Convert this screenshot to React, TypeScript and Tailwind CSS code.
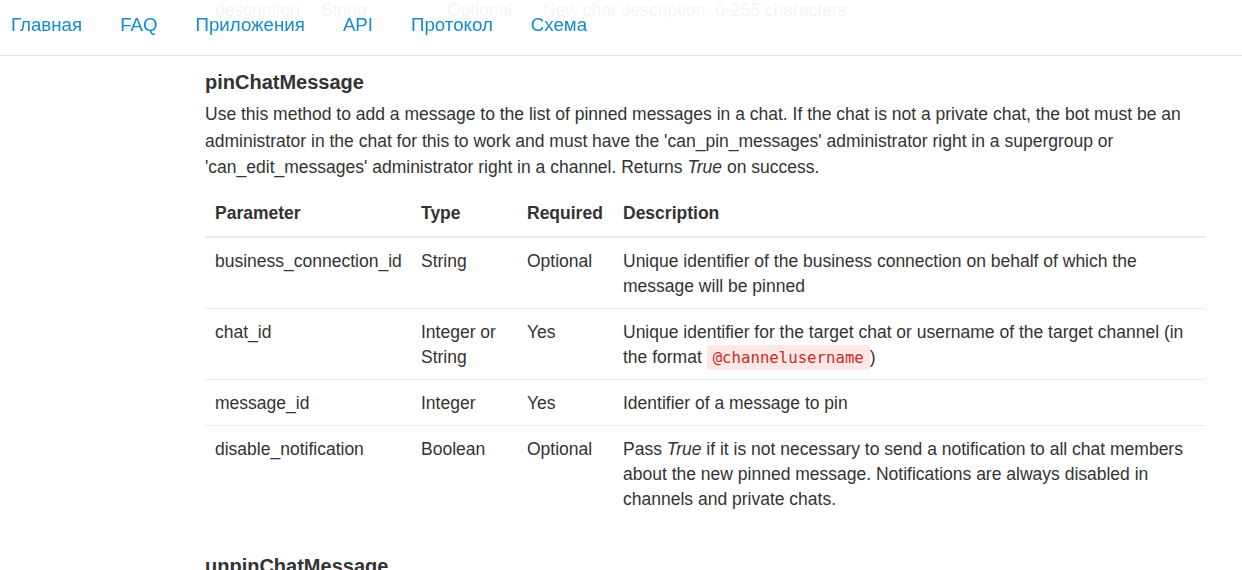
const NAV_LINKS = ['Главная', 'FAQ', 'Приложения', 'API', 'Протокол', 'Схема'];

const PARAMS = [
  {
    name: 'business_connection_id',
    type: 'String',
    required: 'Optional',
    description: <>Unique identifier of the business connection on behalf of which the message will be pinned</>,
  },
  {
    name: 'chat_id',
    type: 'Integer or String',
    required: 'Yes',
    description: (
      <>
        Unique identifier for the target chat or username of the target channel (in the format{' '}
        <code className="rounded-[2px] bg-[#fde8e5] px-[6px] py-[3px] font-['DejaVu_Sans_Mono',monospace] text-[15.7px] text-[#cf2a2a]">
          @channelusername
        </code>
        )
      </>
    ),
  },
  {
    name: 'message_id',
    type: 'Integer',
    required: 'Yes',
    description: <>Identifier of a message to pin</>,
  },
  {
    name: 'disable_notification',
    type: 'Boolean',
    required: 'Optional',
    description: (
      <>
        Pass <em>True</em> if it is not necessary to send a notification to all chat members about the new pinned
        message. Notifications are always disabled in channels and private chats.
      </>
    ),
  },
];

export default function App() {
  return (
    <div className="min-h-[570px] overflow-hidden bg-white font-['Liberation_Sans',Arial,sans-serif] text-[17.5px] text-[#333]">
      {/* sticky header over the scrolled page */}
      <nav className="fixed inset-x-0 top-0 z-10 flex h-[56px] items-center gap-[38px] border-b border-[#e5e5e5] bg-white/[0.95] pl-[11px] text-[18.7px] text-[#168acd]">
        {NAV_LINKS.map((link) => (
          <a key={link} href="#" className="pb-[5px] hover:underline">
            {link}
          </a>
        ))}
      </nav>

      <div className="ml-[205px] mt-[-12px] w-[1000px]">
        {/* tail of the previous method's table, scrolled under the header */}
        <table className="w-full table-fixed border-collapse leading-[25px]">
          <colgroup>
            <col className="w-[106px]" />
            <col className="w-[126px]" />
            <col className="w-[96px]" />
            <col />
          </colgroup>
          <tbody>
            <tr>
              <td className="p-[10px] align-top">description</td>
              <td className="p-[10px] align-top">String</td>
              <td className="p-[10px] align-top">Optional</td>
              <td className="p-[10px] align-top">New chat description, 0-255 characters</td>
            </tr>
          </tbody>
        </table>

        <h4 className="mt-[34px] text-[20px] font-bold leading-[30px]">pinChatMessage</h4>
        <p className="mt-[4px] leading-[26.5px]">
          Use this method to add a message to the list of pinned messages in a chat. If the chat is not a private chat,
          the bot must be an administrator in the chat for this to work and must have the 'can_pin_messages'
          administrator right in a supergroup or 'can_edit_messages' administrator right in a channel. Returns{' '}
          <em>True</em> on success.
        </p>

        <table className="mt-[10px] w-full table-fixed border-collapse leading-[25px]">
          <colgroup>
            <col className="w-[206px]" />
            <col className="w-[106px]" />
            <col className="w-[96px]" />
            <col />
          </colgroup>
          <thead>
            <tr className="border-b-2 border-[#ececec] text-left">
              <th className="p-[10px] font-bold">Parameter</th>
              <th className="p-[10px] font-bold">Type</th>
              <th className="p-[10px] font-bold">Required</th>
              <th className="p-[10px] font-bold">Description</th>
            </tr>
          </thead>
          <tbody>
            {PARAMS.map((param, i) => (
              <tr key={param.name} className={i > 0 ? 'border-t border-[#ececec]' : ''}>
                <td className="px-[10px] pb-[9px] pt-[11px] align-top">{param.name}</td>
                <td className="px-[10px] pb-[9px] pt-[11px] align-top">{param.type}</td>
                <td className="px-[10px] pb-[9px] pt-[11px] align-top">{param.required}</td>
                <td className="px-[10px] pb-[9px] pt-[11px] align-top">{param.description}</td>
              </tr>
            ))}
          </tbody>
        </table>

        <h4 className="mt-[30px] text-[20px] font-bold leading-[30px]">unpinChatMessage</h4>
      </div>
    </div>
  );
}
